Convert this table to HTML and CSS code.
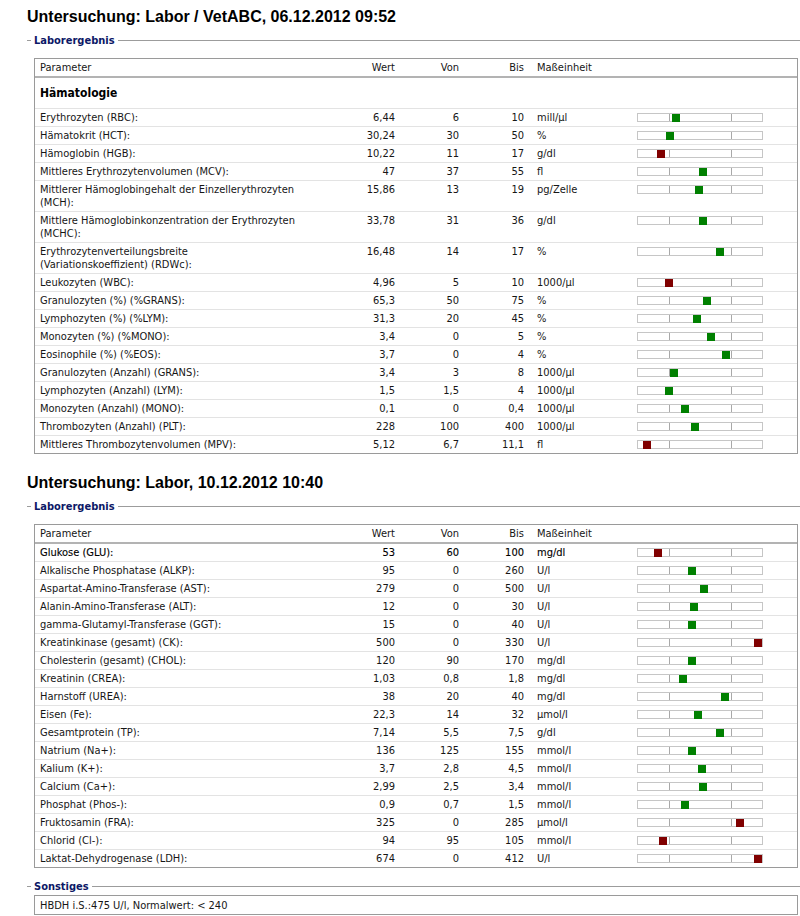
FILE: index.html
```html
<!DOCTYPE html>
<html lang="de">
<head>
<meta charset="utf-8">
<title>Laborbefunde</title>
<link rel="stylesheet" href="styles.css">
</head>
<body>
<section class="exam">
  <h1 class="exam-title">Untersuchung: Labor / VetABC, 06.12.2012 09:52</h1>
  <fieldset class="group">
    <legend class="group-title">Laborergebnis</legend>
    <table class="lab">
      <thead>
        <tr>
          <th class="c-param">Parameter</th>
          <th class="c-wert num">Wert</th>
          <th class="c-von num">Von</th>
          <th class="c-bis num">Bis</th>
          <th class="c-unit unit">Maßeinheit</th>
          <th class="c-bar"></th>
          <th class="c-rest"></th>
        </tr>
      </thead>
      <tbody>
        <tr class="cat"><td colspan="7">Hämatologie</td></tr>
        <tr><td>Erythrozyten (RBC):</td><td class="num">6,44</td><td class="num">6</td><td class="num">10</td><td class="unit">mill/µl</td><td class="barcell"><div class="gauge"><span class="mark ok" style="left:30.5%"></span></div></td><td></td></tr>
        <tr><td>Hämatokrit (HCT):</td><td class="num">30,24</td><td class="num">30</td><td class="num">50</td><td class="unit">%</td><td class="barcell"><div class="gauge"><span class="mark ok" style="left:25.6%"></span></div></td><td></td></tr>
        <tr><td>Hämoglobin (HGB):</td><td class="num">10,22</td><td class="num">11</td><td class="num">17</td><td class="unit">g/dl</td><td class="barcell"><div class="gauge"><span class="mark bad" style="left:18.5%"></span></div></td><td></td></tr>
        <tr><td>Mittleres Erythrozytenvolumen (MCV):</td><td class="num">47</td><td class="num">37</td><td class="num">55</td><td class="unit">fl</td><td class="barcell"><div class="gauge"><span class="mark ok" style="left:52.8%"></span></div></td><td></td></tr>
        <tr><td>Mittlerer Hämoglobingehalt der Einzellerythrozyten<br>(MCH):</td><td class="num">15,86</td><td class="num">13</td><td class="num">19</td><td class="unit">pg/Zelle</td><td class="barcell"><div class="gauge"><span class="mark ok" style="left:48.8%"></span></div></td><td></td></tr>
        <tr><td>Mittlere Hämoglobinkonzentration der Erythrozyten<br>(MCHC):</td><td class="num">33,78</td><td class="num">31</td><td class="num">36</td><td class="unit">g/dl</td><td class="barcell"><div class="gauge"><span class="mark ok" style="left:52.8%"></span></div></td><td></td></tr>
        <tr><td>Erythrozytenverteilungsbreite<br>(Variationskoeffizient) (RDWc):</td><td class="num">16,48</td><td class="num">14</td><td class="num">17</td><td class="unit">%</td><td class="barcell"><div class="gauge"><span class="mark ok" style="left:66.3%"></span></div></td><td></td></tr>
        <tr><td>Leukozyten (WBC):</td><td class="num">4,96</td><td class="num">5</td><td class="num">10</td><td class="unit">1000/µl</td><td class="barcell"><div class="gauge"><span class="mark bad" style="left:24.6%"></span></div></td><td></td></tr>
        <tr><td>Granulozyten (%) (%GRANS):</td><td class="num">65,3</td><td class="num">50</td><td class="num">75</td><td class="unit">%</td><td class="barcell"><div class="gauge"><span class="mark ok" style="left:55.6%"></span></div></td><td></td></tr>
        <tr><td>Lymphozyten (%) (%LYM):</td><td class="num">31,3</td><td class="num">20</td><td class="num">45</td><td class="unit">%</td><td class="barcell"><div class="gauge"><span class="mark ok" style="left:47.6%"></span></div></td><td></td></tr>
        <tr><td>Monozyten (%) (%MONO):</td><td class="num">3,4</td><td class="num">0</td><td class="num">5</td><td class="unit">%</td><td class="barcell"><div class="gauge"><span class="mark ok" style="left:59%"></span></div></td><td></td></tr>
        <tr><td>Eosinophile (%) (%EOS):</td><td class="num">3,7</td><td class="num">0</td><td class="num">4</td><td class="unit">%</td><td class="barcell"><div class="gauge"><span class="mark ok" style="left:71.3%"></span></div></td><td></td></tr>
        <tr><td>Granulozyten (Anzahl) (GRANS):</td><td class="num">3,4</td><td class="num">3</td><td class="num">8</td><td class="unit">1000/µl</td><td class="barcell"><div class="gauge"><span class="mark ok" style="left:29%"></span></div></td><td></td></tr>
        <tr><td>Lymphozyten (Anzahl) (LYM):</td><td class="num">1,5</td><td class="num">1,5</td><td class="num">4</td><td class="unit">1000/µl</td><td class="barcell"><div class="gauge"><span class="mark ok" style="left:25%"></span></div></td><td></td></tr>
        <tr><td>Monozyten (Anzahl) (MONO):</td><td class="num">0,1</td><td class="num">0</td><td class="num">0,4</td><td class="unit">1000/µl</td><td class="barcell"><div class="gauge"><span class="mark ok" style="left:37.5%"></span></div></td><td></td></tr>
        <tr><td>Thrombozyten (Anzahl) (PLT):</td><td class="num">228</td><td class="num">100</td><td class="num">400</td><td class="unit">1000/µl</td><td class="barcell"><div class="gauge"><span class="mark ok" style="left:46.3%"></span></div></td><td></td></tr>
        <tr><td>Mittleres Thrombozytenvolumen (MPV):</td><td class="num">5,12</td><td class="num">6,7</td><td class="num">11,1</td><td class="unit">fl</td><td class="barcell"><div class="gauge"><span class="mark bad" style="left:7.1%"></span></div></td><td></td></tr>
      </tbody>
    </table>
  </fieldset>
</section>

<section class="exam">
  <h1 class="exam-title">Untersuchung: Labor, 10.12.2012 10:40</h1>
  <fieldset class="group">
    <legend class="group-title">Laborergebnis</legend>
    <table class="lab">
      <thead>
        <tr>
          <th class="c-param">Parameter</th>
          <th class="c-wert num">Wert</th>
          <th class="c-von num">Von</th>
          <th class="c-bis num">Bis</th>
          <th class="c-unit unit">Maßeinheit</th>
          <th class="c-bar"></th>
          <th class="c-rest"></th>
        </tr>
      </thead>
      <tbody>
        <tr class="hl"><td>Glukose (GLU):</td><td class="num">53</td><td class="num">60</td><td class="num">100</td><td class="unit">mg/dl</td><td class="barcell"><div class="gauge"><span class="mark bad" style="left:16.3%"></span></div></td><td></td></tr>
        <tr><td>Alkalische Phosphatase (ALKP):</td><td class="num">95</td><td class="num">0</td><td class="num">260</td><td class="unit">U/l</td><td class="barcell"><div class="gauge"><span class="mark ok" style="left:43.3%"></span></div></td><td></td></tr>
        <tr><td>Aspartat-Amino-Transferase (AST):</td><td class="num">279</td><td class="num">0</td><td class="num">500</td><td class="unit">U/l</td><td class="barcell"><div class="gauge"><span class="mark ok" style="left:52.9%"></span></div></td><td></td></tr>
        <tr><td>Alanin-Amino-Transferase (ALT):</td><td class="num">12</td><td class="num">0</td><td class="num">30</td><td class="unit">U/l</td><td class="barcell"><div class="gauge"><span class="mark ok" style="left:45%"></span></div></td><td></td></tr>
        <tr><td>gamma-Glutamyl-Transferase (GGT):</td><td class="num">15</td><td class="num">0</td><td class="num">40</td><td class="unit">U/l</td><td class="barcell"><div class="gauge"><span class="mark ok" style="left:43.8%"></span></div></td><td></td></tr>
        <tr><td>Kreatinkinase (gesamt) (CK):</td><td class="num">500</td><td class="num">0</td><td class="num">330</td><td class="unit">U/l</td><td class="barcell"><div class="gauge"><span class="mark bad" style="left:96.8%"></span></div></td><td></td></tr>
        <tr><td>Cholesterin (gesamt) (CHOL):</td><td class="num">120</td><td class="num">90</td><td class="num">170</td><td class="unit">mg/dl</td><td class="barcell"><div class="gauge"><span class="mark ok" style="left:43.8%"></span></div></td><td></td></tr>
        <tr><td>Kreatinin (CREA):</td><td class="num">1,03</td><td class="num">0,8</td><td class="num">1,8</td><td class="unit">mg/dl</td><td class="barcell"><div class="gauge"><span class="mark ok" style="left:36.5%"></span></div></td><td></td></tr>
        <tr><td>Harnstoff (UREA):</td><td class="num">38</td><td class="num">20</td><td class="num">40</td><td class="unit">mg/dl</td><td class="barcell"><div class="gauge"><span class="mark ok" style="left:70%"></span></div></td><td></td></tr>
        <tr><td>Eisen (Fe):</td><td class="num">22,3</td><td class="num">14</td><td class="num">32</td><td class="unit">µmol/l</td><td class="barcell"><div class="gauge"><span class="mark ok" style="left:48.1%"></span></div></td><td></td></tr>
        <tr><td>Gesamtprotein (TP):</td><td class="num">7,14</td><td class="num">5,5</td><td class="num">7,5</td><td class="unit">g/dl</td><td class="barcell"><div class="gauge"><span class="mark ok" style="left:66%"></span></div></td><td></td></tr>
        <tr><td>Natrium (Na+):</td><td class="num">136</td><td class="num">125</td><td class="num">155</td><td class="unit">mmol/l</td><td class="barcell"><div class="gauge"><span class="mark ok" style="left:43.3%"></span></div></td><td></td></tr>
        <tr><td>Kalium (K+):</td><td class="num">3,7</td><td class="num">2,8</td><td class="num">4,5</td><td class="unit">mmol/l</td><td class="barcell"><div class="gauge"><span class="mark ok" style="left:51.5%"></span></div></td><td></td></tr>
        <tr><td>Calcium (Ca+):</td><td class="num">2,99</td><td class="num">2,5</td><td class="num">3,4</td><td class="unit">mmol/l</td><td class="barcell"><div class="gauge"><span class="mark ok" style="left:52.2%"></span></div></td><td></td></tr>
        <tr><td>Phosphat (Phos-):</td><td class="num">0,9</td><td class="num">0,7</td><td class="num">1,5</td><td class="unit">mmol/l</td><td class="barcell"><div class="gauge"><span class="mark ok" style="left:37.5%"></span></div></td><td></td></tr>
        <tr><td>Fruktosamin (FRA):</td><td class="num">325</td><td class="num">0</td><td class="num">285</td><td class="unit">µmol/l</td><td class="barcell"><div class="gauge"><span class="mark bad" style="left:82%"></span></div></td><td></td></tr>
        <tr><td>Chlorid (Cl-):</td><td class="num">94</td><td class="num">95</td><td class="num">105</td><td class="unit">mmol/l</td><td class="barcell"><div class="gauge"><span class="mark bad" style="left:20%"></span></div></td><td></td></tr>
        <tr><td>Laktat-Dehydrogenase (LDH):</td><td class="num">674</td><td class="num">0</td><td class="num">412</td><td class="unit">U/l</td><td class="barcell"><div class="gauge"><span class="mark bad" style="left:96.8%"></span></div></td><td></td></tr>
      </tbody>
    </table>
  </fieldset>
  <fieldset class="group last">
    <legend class="group-title">Sonstiges</legend>
    <div class="note">HBDH i.S.:475 U/l, Normalwert: &lt; 240</div>
  </fieldset>
</section>
</body>
</html>
```

FILE: styles.css
```css
*, *::before, *::after { box-sizing: border-box; }

html { background: #fff; }

body {
  margin: 0;
  padding: 0 0 0 27px;
  font-family: "DejaVu Sans Condensed", "DejaVu Sans", Verdana, sans-serif;
  font-stretch: condensed;
  font-size: 11px;
  line-height: 13px;
  color: #161616;
  background: #fff;
}

.exam { padding-top: 8px; }

.exam-title {
  margin: 0 0 8px;
  font-family: "Liberation Sans", Arial, sans-serif;
  font-stretch: normal;
  font-size: 16px;
  line-height: 18px;
  font-weight: bold;
  color: #000;
}

.group {
  margin: 0 0 12px;
  padding: 0 2px 0 7px;
  border: 0;
  border-top: 1px solid #9c9c9c;
  min-width: 0;
}

.group.last { margin-bottom: 0; }

.group-title {
  margin-left: -3px;
  padding: 0 3px;
  font-weight: bold;
  font-size: 11px;
  line-height: 13px;
  color: #0c1866;
}

.lab {
  width: 100%;
  margin-top: 11px;
  table-layout: fixed;
  border-collapse: separate;
  border-spacing: 0;
  border: 1px solid #9a9a9a;
}

.lab th,
.lab td {
  padding: 2px 5px;
  vertical-align: top;
  text-align: left;
  font-weight: normal;
  border-bottom: 1px solid #e3e3e3;
}

.lab thead th { border-bottom: 2px solid #b3b3b3; }
.lab tbody tr:last-child td { border-bottom: 0; }

.c-param { width: 275px; }
.c-wert { width: 90px; }
.c-von { width: 64px; }
.c-bis { width: 65px; }
.c-unit { width: 100px; }
.c-bar { width: 142px; }
.c-rest { width: 26px; }

.lab .num { text-align: right; }
.lab .unit { padding-left: 8px; }
.lab .barcell { padding: 4px 8px 0; }

.cat td {
  padding: 9px 5px 8px;
  font-weight: bold;
  font-size: 12px;
  color: #000;
}

.hl td {
  color: #000;
  -webkit-text-stroke: 0.12px #000;
}

.gauge {
  position: relative;
  width: 126px;
  height: 9px;
  border: 1px solid #c6c6c6;
  background: #fff;
}

.gauge::before,
.gauge::after {
  content: "";
  position: absolute;
  top: 0;
  bottom: 0;
  width: 1px;
  background: #a9a9a9;
}
.gauge::before { left: 25%; }
.gauge::after { left: 75%; }

.mark {
  position: absolute;
  top: 0;
  width: 8px;
  height: 8px;
  margin-left: -4px;
  z-index: 1;
}
.mark.ok { background: #008000; }
.mark.bad { background: #800000; }

.note {
  margin-top: 2px;
  padding: 3px 5px 2px;
  border: 1px solid #9a9a9a;
}
```
